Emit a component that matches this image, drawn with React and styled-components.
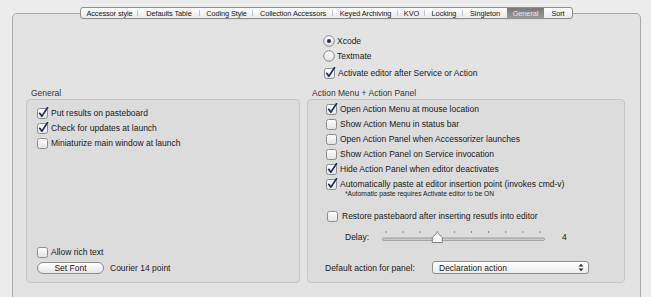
import React from 'react'
import styled, { createGlobalStyle } from 'styled-components'

const tabs = [
  { label: 'Accessor style', width: 57 },
  { label: 'Defaults Table', width: 62 },
  { label: 'Coding Style', width: 53 },
  { label: 'Collection Accessors', width: 80 },
  { label: 'Keyed Archiving', width: 65 },
  { label: 'KVO', width: 27 },
  { label: 'Locking', width: 38 },
  { label: 'Singleton', width: 44 },
  { label: 'General', width: 37, selected: true },
  { label: 'Sort', width: 28 },
]

const Checkbox = ({ checked }) => (
  <svg width="12" height="12" viewBox="0 0 12 12">
    <defs>
      <linearGradient id="cbg" x1="0" y1="0" x2="0" y2="1">
        <stop offset="0" stopColor="#ffffff" />
        <stop offset="1" stopColor="#e2e2e2" />
      </linearGradient>
    </defs>
    <rect x="0.5" y="1.5" width="10" height="10" rx="2" fill="url(#cbg)" stroke="#8c8c8c" />
    {checked && (
      <path
        d="M2.7 6.3 L4.9 9.1 L10.5 0.7"
        fill="none"
        stroke="#1d2c5a"
        strokeWidth="1.7"
        strokeLinecap="round"
        strokeLinejoin="round"
      />
    )}
  </svg>
)

const Radio = ({ checked }) => (
  <svg width="12" height="12" viewBox="0 0 12 12">
    <defs>
      <linearGradient id="rbg" x1="0" y1="0" x2="0" y2="1">
        <stop offset="0" stopColor="#ffffff" />
        <stop offset="1" stopColor="#e0e0e0" />
      </linearGradient>
    </defs>
    <circle cx="6" cy="6" r="5.3" fill="url(#rbg)" stroke="#8c8c8c" />
    {checked && <circle cx="6" cy="6" r="2" fill="#1d2c5a" />}
  </svg>
)

const Slider = ({ value }) => {
  const ticks = Array.from({ length: 10 }, (_, i) => 4 + i * 17.1)
  const kx = ticks[value - 1]
  return (
    <svg width="164" height="15" viewBox="0 0 164 15">
      {ticks.map((x) => (
        <line key={x} x1={x} y1="2" x2={x} y2="4" stroke="#8a8a8a" strokeWidth="1" />
      ))}
      <rect x="0.5" y="9" width="162" height="2.4" rx="1.2" fill="#cfcfcf" stroke="#8e8e8e" strokeWidth="0.8" />
      <path
        d={`M${kx - 5} 13.5 L${kx - 5} 8.5 L${kx} 3.5 L${kx + 5} 8.5 L${kx + 5} 13.5 Z`}
        fill="#fbfbfb"
        stroke="#7e7e7e"
        strokeLinejoin="round"
      />
    </svg>
  )
}

const PopupArrows = () => (
  <svg width="6" height="9" viewBox="0 0 6 9">
    <path d="M0.5 3.5 L3 0.8 L5.5 3.5 Z" fill="#333" />
    <path d="M0.5 5.5 L3 8.2 L5.5 5.5 Z" fill="#333" />
  </svg>
)

const Option = ({ type = 'check', checked, children, className }) => (
  <Row className={className}>
    {type === 'radio' ? <Radio checked={checked} /> : <Checkbox checked={checked} />}
    <span>{children}</span>
  </Row>
)

const App = () => (
  <>
    <Global />
    <Window>
      <TabView>
        <TabBar>
          {tabs.map((t, i) => (
            <Tab
              key={t.label}
              $w={t.width}
              $selected={t.selected}
              $sep={i < tabs.length - 1 && !t.selected && !tabs[i + 1].selected}
            >
              {t.label}
            </Tab>
          ))}
        </TabBar>

        <TopOptions>
          <Option type="radio" checked>Xcode</Option>
          <Option type="radio">Textmate</Option>
          <Option checked className="activate">Activate editor after Service or Action</Option>
        </TopOptions>

        <Columns>
          <Group $w={274}>
            <GroupLabel>General</GroupLabel>
            <GroupBox $pad="5px 0 7px 10px">
              <Option checked>Put results on pasteboard</Option>
              <Option checked>Check for updates at launch</Option>
              <Option>Miniaturize main window at launch</Option>
              <Spacer />
              <Option className="short">Allow rich text</Option>
              <FontRow>
                <PushButton>Set Font</PushButton>
                <span>Courier 14 point</span>
              </FontRow>
            </GroupBox>
          </Group>

          <Group $w={318}>
            <GroupLabel>Action Menu + Action Panel</GroupLabel>
            <GroupBox $pad="1px 0 0 18px">
              <Option checked>Open Action Menu at mouse location</Option>
              <Option>Show Action Menu in status bar</Option>
              <Option>Open Action Panel when Accessorizer launches</Option>
              <Option>Show Action Panel on Service invocation</Option>
              <Option checked>Hide Action Panel when editor deactivates</Option>
              <Option checked>Automatically paste at editor insertion point (invokes cmd-v)</Option>
              <Note>*Automatic paste requires Activate editor to be ON</Note>
              <Option className="restore">Restore pastebaord after inserting resutls into editor</Option>
              <DelayRow>
                <span className="label">Delay:</span>
                <Slider value={4} />
                <span className="value">4</span>
              </DelayRow>
              <DefaultRow>
                <span className="label">Default action for panel:</span>
                <Popup>
                  <span>Declaration action</span>
                  <PopupArrows />
                </Popup>
              </DefaultRow>
            </GroupBox>
          </Group>
        </Columns>
      </TabView>
    </Window>
  </>
)

const Global = createGlobalStyle`
  html, body {
    margin: 0;
    padding: 0;
    background: #ececec;
  }
  body {
    font-family: "Liberation Sans", Arial, sans-serif;
    font-size: 8.5px;
    color: #1a1a1a;
  }
`

const Window = styled.div`
  width: 651px;
  height: 297px;
  box-sizing: border-box;
  padding: 13px 10px 0 12px;
  overflow: hidden;
  background: #ececec;
`

const TabView = styled.div`
  height: 300px;
  box-sizing: border-box;
  border: 1px solid #aaaaaa;
  border-radius: 5px;
  background: #e3e3e3;
  display: flex;
  flex-direction: column;
`

const TabBar = styled.div`
  align-self: center;
  margin-top: -7px;
  height: 12px;
  box-sizing: border-box;
  display: flex;
  border: 1px solid #8f8f8f;
  border-radius: 3px;
  background: linear-gradient(#fefefe, #e9e9e9);
  overflow: hidden;
  box-shadow: 0 0.5px 0 rgba(0, 0, 0, 0.08);
`

const Tab = styled.div`
  position: relative;
  width: ${(p) => p.$w}px;
  display: flex;
  align-items: center;
  justify-content: center;
  font-size: 7.4px;
  letter-spacing: -0.1px;
  white-space: nowrap;
  color: ${(p) => (p.$selected ? '#ececec' : '#151515')};
  background: ${(p) => (p.$selected ? 'linear-gradient(#7a7a7a, #989898)' : 'transparent')};

  &::after {
    content: '';
    display: ${(p) => (p.$sep ? 'block' : 'none')};
    position: absolute;
    right: 0;
    top: 2px;
    bottom: 2px;
    width: 1px;
    background: #c3c3c3;
  }
`

const TopOptions = styled.div`
  margin: 14px 0 0 310px;
  display: flex;
  flex-direction: column;

  .activate {
    margin-top: 2px;
    padding-left: 1px;
  }
`

const Row = styled.div`
  height: 15px;
  display: flex;
  align-items: center;
  gap: 2px;
  white-space: nowrap;

  svg {
    flex: none;
  }

  &.short {
    height: 14px;
  }

  &.restore {
    margin-top: 10px;
    padding-left: 1px;
    gap: 3px;
  }
`

const Columns = styled.div`
  margin-top: 8px;
  padding-left: 13px;
  display: flex;
  gap: 7px;
`

const Group = styled.div`
  width: ${(p) => p.$w}px;
  display: flex;
  flex-direction: column;
`

const GroupLabel = styled.div`
  height: 11px;
  line-height: 11px;
  padding-left: 5px;
  color: #333;
`

const GroupBox = styled.div`
  height: 184px;
  box-sizing: border-box;
  border: 1px solid #c6c6c6;
  border-radius: 4px;
  background: #dcdcdc;
  padding: ${(p) => p.$pad};
  display: flex;
  flex-direction: column;
`

const Spacer = styled.div`
  flex: 1;
`

const FontRow = styled.div`
  margin-top: 2px;
  height: 14px;
  display: flex;
  align-items: center;
  gap: 6px;
`

const PushButton = styled.div`
  width: 67px;
  height: 12px;
  box-sizing: border-box;
  border: 1px solid #8c8c8c;
  border-radius: 6px;
  background: linear-gradient(#ffffff, #e6e6e6);
  display: flex;
  align-items: center;
  justify-content: center;
  font-size: 8.5px;
`

const Note = styled.div`
  margin: -2px 0 0 19px;
  height: 9px;
  line-height: 9px;
  font-size: 6.7px;
  white-space: nowrap;
`

const DelayRow = styled.div`
  margin: 6px 0 0 19px;
  height: 15px;
  display: flex;
  align-items: center;

  .label {
    width: 37px;
  }

  .value {
    margin-left: 16px;
  }
`

const DefaultRow = styled.div`
  margin: 16px 0 0 -1px;
  height: 15px;
  display: flex;
  align-items: center;

  .label {
    width: 107px;
  }
`

const Popup = styled.div`
  width: 157px;
  height: 13px;
  box-sizing: border-box;
  border: 1px solid #8e8e8e;
  border-radius: 3px;
  background: linear-gradient(#ffffff, #ececec);
  display: flex;
  align-items: center;
  justify-content: space-between;
  padding: 0 4px 0 6px;
`

export default App
